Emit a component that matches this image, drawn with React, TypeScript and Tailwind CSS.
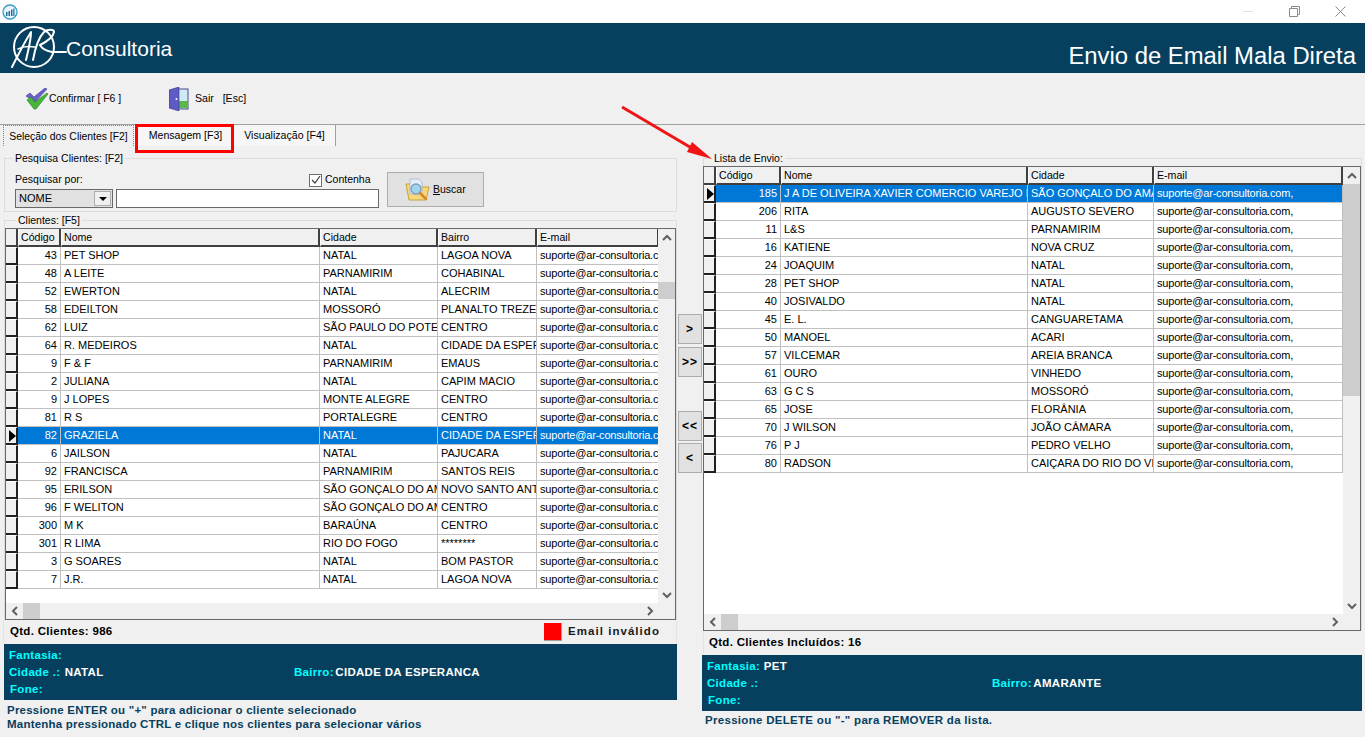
import React from "react";

const leftRows = [
    ["43", "PET SHOP", "NATAL", "LAGOA NOVA"],
    ["48", "A LEITE", "PARNAMIRIM", "COHABINAL"],
    ["52", "EWERTON", "NATAL", "ALECRIM"],
    ["58", "EDEILTON", "MOSSORÓ", "PLANALTO TREZE"],
    ["62", "LUIZ", "SÃO PAULO DO POTENGI", "CENTRO"],
    ["64", "R. MEDEIROS", "NATAL", "CIDADE DA ESPERANCA"],
    ["9", "F & F", "PARNAMIRIM", "EMAUS"],
    ["2", "JULIANA", "NATAL", "CAPIM MACIO"],
    ["9", "J LOPES", "MONTE ALEGRE", "CENTRO"],
    ["81", "R S", "PORTALEGRE", "CENTRO"],
    ["82", "GRAZIELA", "NATAL", "CIDADE DA ESPERANCA"],
    ["6", "JAILSON", "NATAL", "PAJUCARA"],
    ["92", "FRANCISCA", "PARNAMIRIM", "SANTOS REIS"],
    ["95", "ERILSON", "SÃO GONÇALO DO AMARANTE", "NOVO SANTO ANTONIO"],
    ["96", "F WELITON", "SÃO GONÇALO DO AMARANTE", "CENTRO"],
    ["300", "M K", "BARAÚNA", "CENTRO"],
    ["301", "R LIMA", "RIO DO FOGO", "********"],
    ["3", "G SOARES", "NATAL", "BOM PASTOR"],
    ["7", "J.R.", "NATAL", "LAGOA NOVA"],
].map((r) => [...r, "suporte@ar-consultoria.com,"]);

const rightRows = [
    ["185", "J A DE OLIVEIRA XAVIER COMERCIO VAREJO DE", "SÃO GONÇALO DO AMARANTE"],
    ["206", "RITA", "AUGUSTO SEVERO"],
    ["11", "L&S", "PARNAMIRIM"],
    ["16", "KATIENE", "NOVA CRUZ"],
    ["24", "JOAQUIM", "NATAL"],
    ["28", "PET SHOP", "NATAL"],
    ["40", "JOSIVALDO", "NATAL"],
    ["45", "E. L.", "CANGUARETAMA"],
    ["50", "MANOEL", "ACARI"],
    ["57", "VILCEMAR", "AREIA BRANCA"],
    ["61", "OURO", "VINHEDO"],
    ["63", "G C S", "MOSSORÓ"],
    ["65", "JOSE", "FLORÂNIA"],
    ["70", "J WILSON", "JOÃO CÂMARA"],
    ["76", "P J", "PEDRO VELHO"],
    ["80", "RADSON", "CAIÇARA DO RIO DO VENTO"],
].map((r) => [...r, "suporte@ar-consultoria.com,"]);

const Chevron = ({dir}: {dir: "up" | "down" | "left" | "right"}) => {
    const paths = {
        up: "M1 6 L5 2 L9 6",
        down: "M1 2 L5 6 L9 2",
        left: "M6 1 L2 5 L6 9",
        right: "M2 1 L6 5 L2 9",
    };
    const box = dir === "up" || dir === "down" ? "0 0 10 8" : "0 0 8 10";
    return (
        <svg viewBox={box} className={dir === "up" || dir === "down" ? "w-[10px] h-[8px]" : "w-[8px] h-[10px]"}>
            <path d={paths[dir]} fill="none" stroke="#606060" strokeWidth="2"/>
        </svg>
    );
};

const HeaderCell = ({label}: {label: string}) => (
    <div className="h-full pl-[2px] leading-[17px] text-[10.6px] bg-[#f0f0f0] border-l border-l-white border-r-2 border-b-2 border-r-[#404040] border-b-[#404040] truncate">{label}</div>
);

const Grid = ({head, rows, cols, selected, className, thumb}: {
    head: string[];
    rows: string[][];
    cols: string;
    selected: number;
    className: string;
    thumb: string;
}) => (
    <div className={`relative border border-[#696969] bg-white flex flex-col overflow-hidden ${className}`}>
        <div className="flex-1 min-h-0 flex">
            <div className="flex-1 min-w-0 flex flex-col">
                <div className={`grid ${cols} h-[18px] shrink-0`}>
                    <div className="bg-[#f0f0f0] border-r-2 border-b-2 border-[#404040]"/>
                    {head.map((h) => <HeaderCell key={h} label={h}/>)}
                </div>
                {rows.map((row, i) => (
                    <div key={i} className={`grid ${cols} h-[18px] shrink-0`}>
                        <div className="bg-[#f0f0f0] border-t border-t-white border-r-2 border-b-2 border-r-[#202020] border-b-[#202020] flex items-center">
                            {i === selected && (
                                <svg viewBox="0 0 7 12" className="w-[7px] h-[12px] ml-[3px]"><path d="M0 0 L7 6 L0 12Z" fill="#000"/></svg>
                            )}
                        </div>
                        {row.map((cell, c) => (
                            <div
                                key={c}
                                className={`h-full leading-[17px] whitespace-nowrap overflow-hidden border-b border-r border-[#c0c0c0] ${c === 0 ? "text-right pr-[3px]" : "pl-[3px]"} ${c === row.length - 1 ? "tracking-[-0.2px]" : ""} ${i === selected ? "bg-[#0078d7] text-white" : "bg-white text-black"}`}
                            >
                                {cell}
                            </div>
                        ))}
                    </div>
                ))}
            </div>
            <div className="w-[17px] bg-[#f0f0f0] flex flex-col shrink-0">
                <div className="h-[17px] flex items-center justify-center"><Chevron dir="up"/></div>
                <div className="flex-1 min-h-0">
                    <div className={`bg-[#cdcdcd] ${thumb}`}/>
                </div>
                <div className="h-[17px] flex items-center justify-center"><Chevron dir="down"/></div>
            </div>
        </div>
        <div className="h-[16px] shrink-0 bg-[#f0f0f0] flex items-center">
            <div className="w-[17px] flex items-center justify-center"><Chevron dir="left"/></div>
            <div className="h-full w-[17px] bg-[#cdcdcd]"/>
            <div className="flex-1"/>
            <div className="w-[17px] mr-[17px] flex items-center justify-center"><Chevron dir="right"/></div>
        </div>
    </div>
);

const MoveButton = ({label, className}: {label: string; className: string}) => (
    <div className={`w-[24px] h-[30px] ml-[1px] bg-[#e1e1e1] border border-[#adadad] flex items-center justify-center font-bold text-[12px] tracking-[1px] text-black ${className}`}>
        {label}
    </div>
);

const InfoPanel = ({fantasia, cidade, bairro, className}: {
    fantasia: string;
    cidade: string;
    bairro: string;
    className: string;
}) => (
    <div className={`h-[56px] bg-[#07405f] pl-[5px] pt-[3px] text-[11.5px] font-bold tracking-[0.3px] leading-[17px] ${className}`}>
        <div><span className="text-[#00ffff]">Fantasia:</span> <span className="text-white">{fantasia}</span></div>
        <div className="flex">
            <div className="w-[285px]"><span className="text-[#00ffff]">Cidade .:</span> <span className="ml-[1px] text-white">{cidade}</span></div>
            <div><span className="text-[#00ffff]">Bairro:</span> <span className="-ml-[2px] text-white">{bairro}</span></div>
        </div>
        <div className="pl-[1px] text-[#00ffff]">Fone:</div>
    </div>
);

const ArLogo = () => (
    <svg viewBox="0 0 56 50" className="w-[56px] h-[50px] shrink-0 ml-[11px]" fill="none" stroke="#fff" strokeLinecap="round" strokeLinejoin="round">
        <circle cx="23" cy="24" r="20" strokeWidth="2"/>
        <path d="M1 44 C6 34 13 20 20 9 C20 18 17 28 15 37" strokeWidth="2"/>
        <path d="M7 26 C12 23 18 23 24 24" strokeWidth="1.5"/>
        <path d="M22 37 C24 26 28 14 33 9 C37 6 43 6 43 9 C42 15 33 20 29 22 C31 26 36 28 41 29 L55 29" strokeWidth="2"/>
    </svg>
);

const AppIcon = () => (
    <svg viewBox="0 0 16 16" className="w-[16px] h-[16px]">
        <circle cx="8" cy="8" r="7" fill="#e8f5fb" stroke="#3a9bc4" strokeWidth="1.3"/>
        <path d="M4 8h1.5v4H4zM6.500 7H8v5H6.500zM9 5.500h1.500V12H9zM11.300 4.500h1.200V12h-1.200z" fill="#1d6fa0"/>
    </svg>
);

const CheckIcon = () => (
    <svg viewBox="0 0 24 22" className="w-[24px] h-[22px]">
        <path d="M1 8 L5 5 L9 9 L20 0 L22 1 L10 14 Z" fill="#6a62c8" stroke="#3d3794" strokeWidth="0.6"/>
        <path d="M2 12 L6 9 L10 14 L22 5 L23 6 L11 21 L9 21 Z" fill="#47b53a" stroke="#1f7a1c" strokeWidth="0.6"/>
    </svg>
);

const DoorIcon = () => (
    <svg viewBox="0 0 20 24" className="w-[20px] h-[24px]">
        <rect x="7" y="2" width="12" height="20" fill="#cfe9f7" stroke="#4a4a8c"/>
        <rect x="10" y="14" width="9" height="7" fill="#5cb848"/>
        <path d="M0 3 L10 0 L10 24 L0 21 Z" fill="#5d5cc4" stroke="#35357f" strokeWidth="0.6"/>
        <circle cx="7.500" cy="12" r="1" fill="#fff"/>
    </svg>
);

const SearchIcon = () => (
    <svg viewBox="0 0 26 26" className="w-[26px] h-[26px]">
        <path d="M1 7 L9 7 L11 10 L24 10 L21 23 L4 23 Z" fill="#f5d77c" stroke="#c9a13c"/>
        <path d="M5 2 L14 2 L17 5 L17 17 L5 17 Z" fill="#e4ecf7" stroke="#a4b4d0" strokeWidth="0.8"/>
        <circle cx="11" cy="12" r="5" fill="#9fd4ef" stroke="#7f9fb8" strokeWidth="1.300"/>
        <path d="M15 16 L21 22" stroke="#d9862a" strokeWidth="2.500" strokeLinecap="round"/>
    </svg>
);

export default function App() {
    return (
        <div className="relative w-[1365px] h-[737px] overflow-hidden bg-[#f0f0f0] text-[11px] text-black font-['Liberation_Sans',sans-serif]">
            {/* Title bar */}
            <div className="h-[23px] bg-white flex items-center pl-[2px]">
                <AppIcon/>
                <div className="ml-auto flex items-center">
                    <div className="w-[10px] h-px bg-[#e3e3e3] mr-[36px]"/>
                    <svg viewBox="0 0 11 11" className="w-[11px] h-[11px] mr-[35px]" fill="none" stroke="#8a8a8a">
                        <path d="M.5 2.500h8v8h-8zM2.500 2.500v-2h8v8h-2"/>
                    </svg>
                    <svg viewBox="0 0 11 11" className="w-[11px] h-[11px] mr-[19px]" fill="none" stroke="#8a8a8a">
                        <path d="M.5 .5l10 10M10.500 .5l-10 10"/>
                    </svg>
                </div>
            </div>

            {/* Header */}
            <div className="h-[50px] bg-[#07405f] flex items-center text-white">
                <ArLogo/>
                <span className="text-[21px] -ml-[1px] mt-[2px]">Consultoria</span>
                <span className="ml-auto mr-[9px] mt-[15px] text-[23.85px]">Envio de Email Mala Direta</span>
            </div>

            {/* Toolbar */}
            <div className="h-[52px] flex items-center border-b border-[#a0a0a0] text-[10.6px]">
                <div className="ml-[25px] w-[144px] flex items-center">
                    <CheckIcon/>
                    <span className="text-[10.4px]">Confirmar [ F6 ]</span>
                </div>
                <div className="flex items-center">
                    <DoorIcon/>
                    <span className="ml-[6px] whitespace-pre">Sair   [Esc]</span>
                </div>
            </div>

            {/* Tabs */}
            <div className="h-[21px] flex pl-[3px] items-stretch text-[10.6px] whitespace-nowrap">
                <div className="w-[131px] text-center leading-[21px] bg-[#f0f0f0] border border-[#808080] border-b-0 border-dotted text-[10.4px]">Seleção dos Clientes [F2]</div>
                <div className="w-[100px] pl-[2px] text-center leading-[21px] bg-[#f6f6f6] border-l border-white">Mensagem [F3]</div>
                <div className="w-[102px] text-center leading-[21px] bg-[#f6f6f6] border-r border-[#a0a0a0]">Visualização [F4]</div>
            </div>

            {/* Body */}
            <div className="flex">
                {/* Left side */}
                <div className="w-[674px] ml-[3px] shrink-0">
                    <fieldset className="mt-[5px] ml-[1px] h-[61px] border border-[#dcdcdc] px-[10px]">
                        <legend className="px-[2px] -ml-[2px] leading-[14px] text-[10.5px]">Pesquisa Clientes: [F2]</legend>
                        <div className="flex text-[10.5px]">
                            <div className="w-[365px]">
                                <div className="leading-[14px] mt-[7px]">Pesquisar por:</div>
                                <div className="flex mt-[3px]">
                                    <div className="w-[98px] h-[19px] border border-[#696969] bg-[#e1e1e1] flex items-center pl-[3px] pr-[1px] text-[11px]">
                                        <span className="flex-1">NOME</span>
                                        <div className="w-[17px] h-[15px] border border-[#adadad] bg-[#f0f0f0] flex items-center justify-center">
                                            <svg viewBox="0 0 8 4" className="w-[8px] h-[4px]"><path d="M0 0h8L4 4z" fill="#000"/></svg>
                                        </div>
                                    </div>
                                    <div className="w-[263px] h-[19px] ml-[3px] bg-white border border-[#696969]"/>
                                </div>
                            </div>
                            <div className="w-[0px]">
                                <div className="flex items-center h-[14px] mt-[8px] -ml-[71px]">
                                    <div className="w-[13px] h-[13px] shrink-0 border border-[#6e6e6e] bg-white flex items-center justify-center">
                                        <svg viewBox="0 0 10 10" className="w-[10px] h-[10px]"><path d="M1 5l3 3 5-7" fill="none" stroke="#404040" strokeWidth="1.200"/></svg>
                                    </div>
                                    <span className="ml-[3px]">Contenha</span>
                                </div>
                            </div>
                            <div className="w-[97px] h-[35px] ml-[7px] mt-[7px] bg-[#e1e1e1] border border-[#adadad] flex items-center pl-[17px]">
                                <SearchIcon/>
                                <span className="ml-[2px]"><u>B</u>uscar</span>
                            </div>
                        </div>
                    </fieldset>

                    <fieldset className="mt-[1px] ml-[1px] h-[407px] border-t border-l border-r border-[#dcdcdc]">
                        <legend className="ml-[11px] px-[2px] leading-[14px] text-[10.5px]">Clientes: [F5]</legend>
                        <Grid
                            head={["Código", "Nome", "Cidade", "Bairro", "E-mail"]}
                            rows={leftRows}
                            cols="grid-cols-[12px_43px_259px_118px_99px_122px]"
                            selected={10}
                            className="w-[671px] h-[392px] mt-[1px]"
                            thumb="mt-[36px] h-[17px]"
                        />
                    </fieldset>

                    <div className="h-[24px] flex items-center text-[11.5px] font-bold tracking-[0.3px] border-l border-r border-[#e4e4e4] pl-[6px]">
                        <span>Qtd. Clientes: 986</span>
                        <div className="ml-auto w-[18px] h-[18px] bg-[#ff0000] border-r border-b border-[#a0a0a0]"/>
                        <span className="ml-[6px] mr-[16px] tracking-[1.05px] text-[#1a1a1a]">Email inválido</span>
                    </div>

                    <InfoPanel fantasia="" cidade="NATAL" bairro="CIDADE DA ESPERANCA" className="ml-[1px]"/>

                    <div className="mt-[3px] ml-[4px] leading-[14px] text-[11.5px] font-bold tracking-[0.22px] text-[#07405f]">
                        <div>Pressione ENTER ou "+" para adicionar o cliente selecionado</div>
                        <div>Mantenha pressionado CTRL e clique nos clientes para selecionar vários</div>
                    </div>
                </div>

                {/* Move buttons */}
                <div className="w-[26px] shrink-0 pt-[168px]">
                    <MoveButton label=">" className=""/>
                    <MoveButton label=">>" className="mt-[3px]"/>
                    <MoveButton label="<<" className="mt-[34px]"/>
                    <MoveButton label="<" className="mt-[2px]"/>
                </div>

                {/* Right side */}
                <div className="w-[659px] shrink-0">
                    <fieldset className="mt-[5px] h-[480px] border-t border-l border-r border-[#dcdcdc]">
                        <legend className="ml-[8px] px-[2px] leading-[14px] text-[10.5px]">Lista de Envio:</legend>
                        <Grid
                            head={["Código", "Nome", "Cidade", "E-mail"]}
                            rows={rightRows}
                            cols="grid-cols-[12px_65px_247px_126px_189px]"
                            selected={0}
                            className="w-[658px] h-[465px] mt-[1px] -ml-[1px]"
                            thumb="h-[212px]"
                        />
                    </fieldset>

                    <div className="h-[24px] flex items-center text-[11.5px] font-bold tracking-[0.3px] border-l border-[#e4e4e4] pl-[5px]">
                        Qtd. Clientes Incluídos: 16
                    </div>

                    <InfoPanel fantasia="PET" cidade="" bairro="AMARANTE" className="-ml-[1px]"/>

                    <div className="mt-[2px] ml-[2px] leading-[14px] text-[11.5px] font-bold tracking-[0.3px] text-[#07405f]">
                        Pressione DELETE ou "-" para REMOVER da lista.
                    </div>
                </div>
            </div>

            {/* Annotation drawn over the screenshot */}
            <div className="absolute left-[135px] top-[124px] w-[99px] h-[29px] border-[3px] border-[#ff0000]"/>
            <svg className="absolute left-[615px] top-[100px] w-[100px] h-[65px]" viewBox="0 0 100 65">
                <path d="M7 7 L85 53" stroke="#f01414" strokeWidth="3"/>
                <path d="M77 42 L97 59 L72 52 Z" fill="#f01414"/>
            </svg>
        </div>
    );
}
